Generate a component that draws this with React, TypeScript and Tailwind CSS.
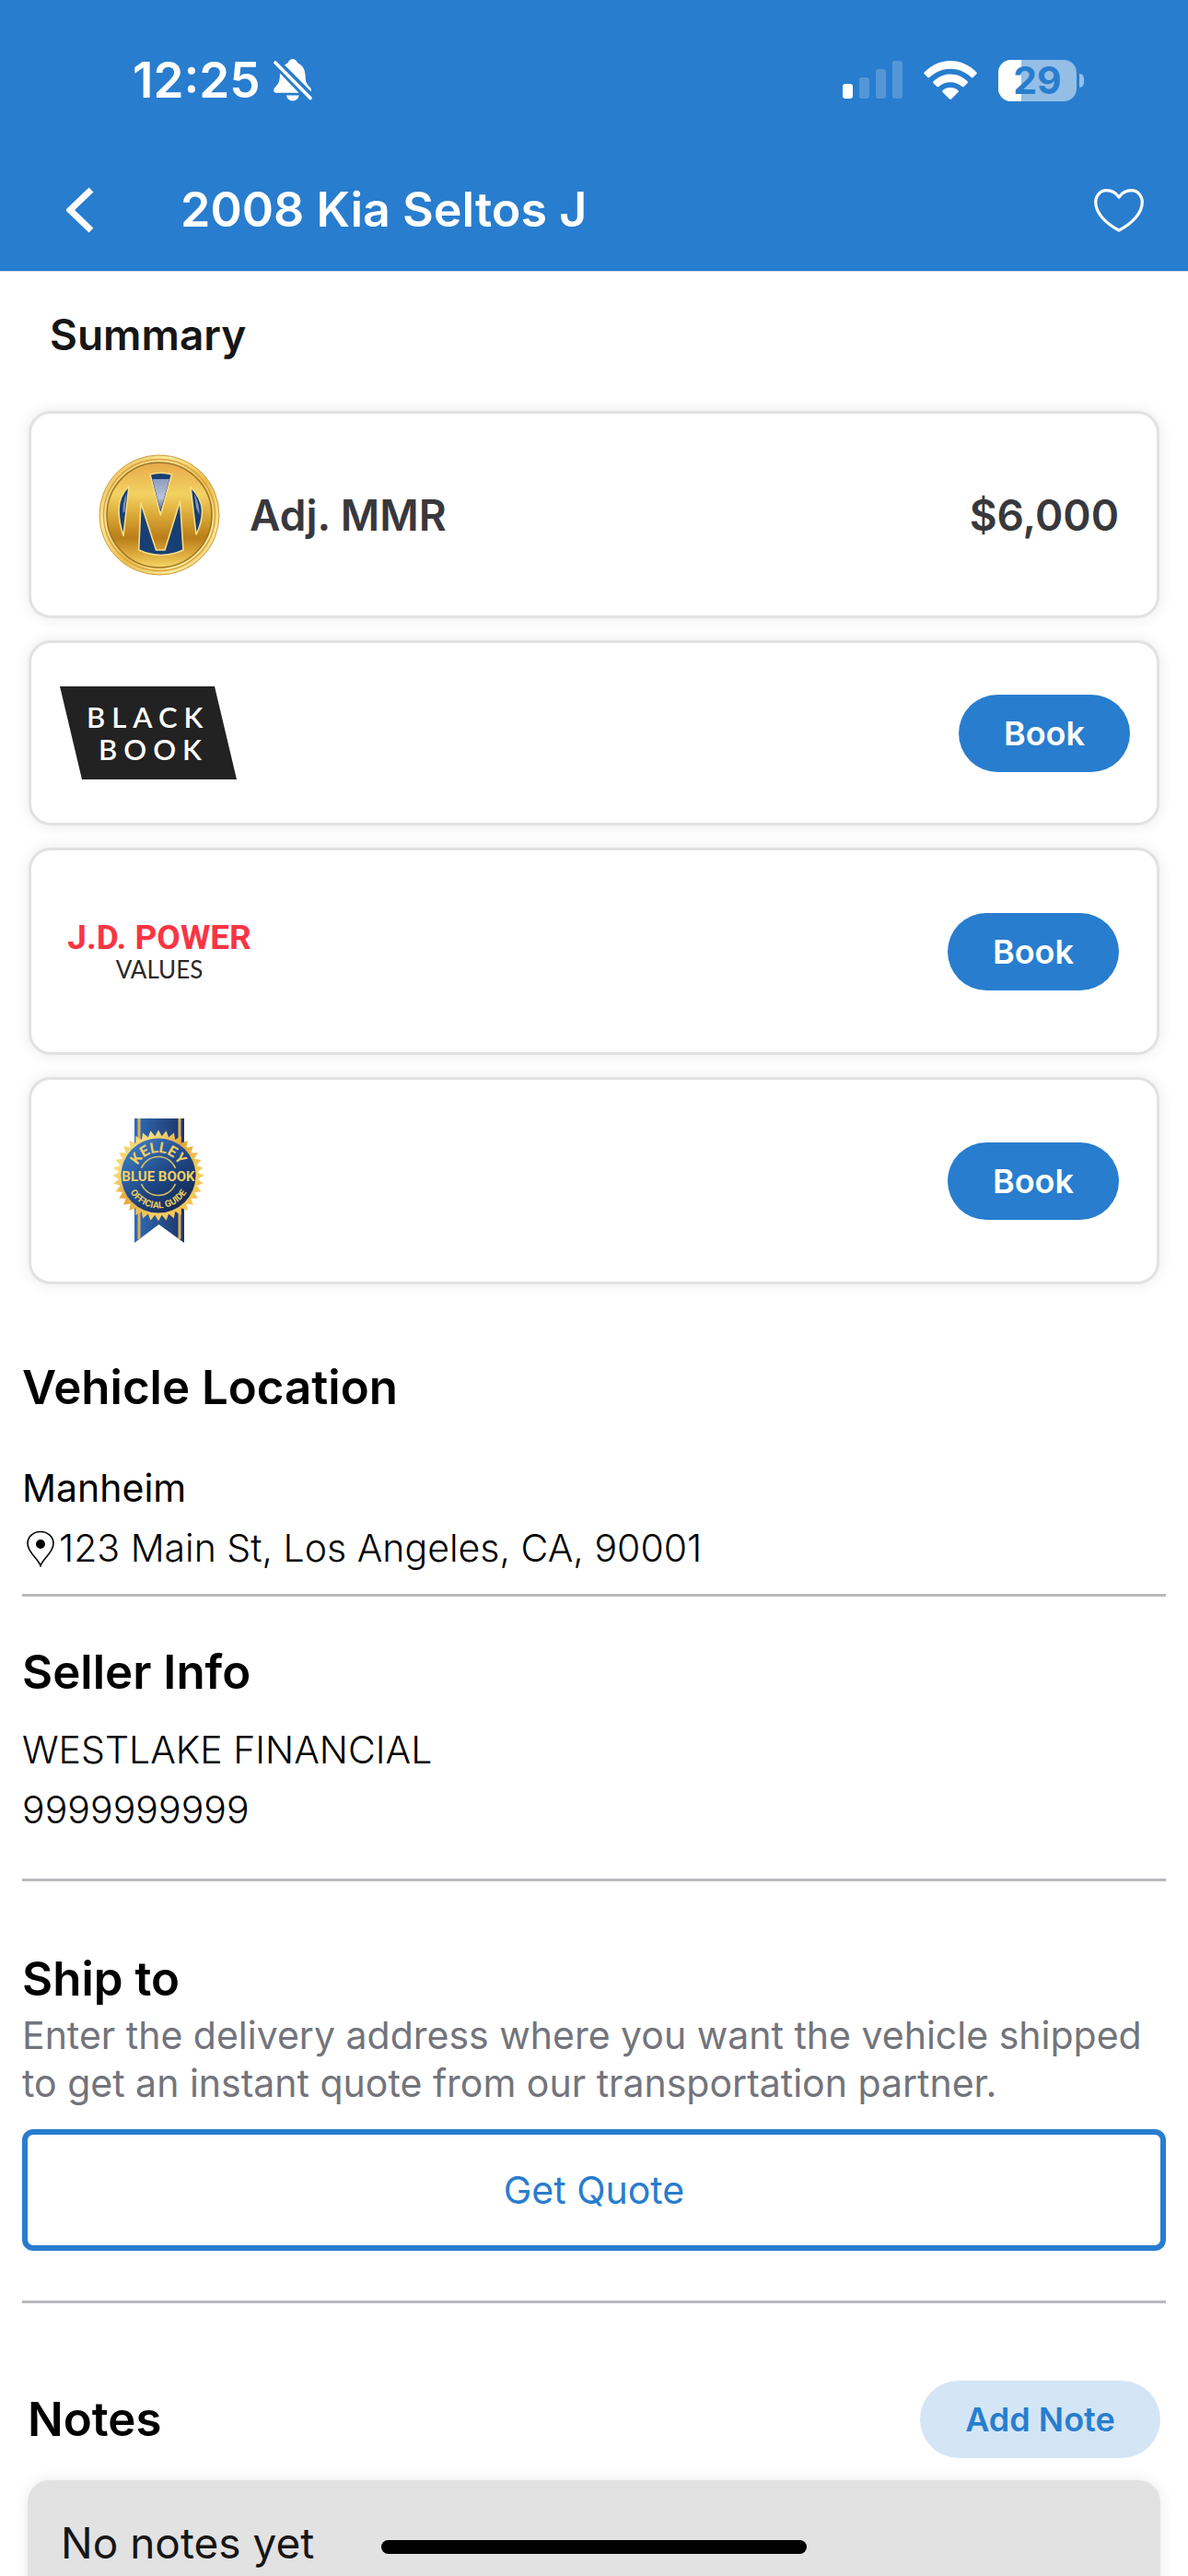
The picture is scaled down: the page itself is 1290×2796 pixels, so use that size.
import React, { useState } from 'react'

/* ─── Status bar ─────────────────────────────────────────────────────────── */

function BellOffIcon() {
  return (
    <svg width="42" height="46" viewBox="0 0 42 46" fill="white" aria-hidden="true">
      <path d="M12 6.5 C14.5 5 15.5 4.6 16 3.6 C17 1.2 18.6 0 20.8 0 C23 0 24.8 1.2 25.8 3.6 C26.2 4.6 27.6 5 29.6 6.6 C33.4 9.6 34.4 14 34.6 19 C34.8 25 35.8 27 39.8 31 C41 32.4 41.2 34 40.6 35.2 Z" />
      <path d="M7 15.5 L27.5 36.8 H3 C0 36.8 -0.8 33.4 1.4 31 C5.6 26.6 6.6 24.6 6.8 19 Z" />
      <path d="M14 39.5 H27.6 C27 43 24.4 45.4 20.8 45.4 C17.2 45.4 14.6 43 14 39.5 Z" />
      <line x1="2" y1="4" x2="40" y2="42.5" stroke="white" strokeWidth="3.6" strokeLinecap="round" />
    </svg>
  )
}

function SignalIcon() {
  return (
    <svg width="65" height="42" viewBox="0 0 65 42" fill="white" aria-hidden="true">
      <rect x="0" y="25" width="11" height="16" rx="3" />
      <rect x="18" y="18" width="11" height="23" rx="3" opacity="0.2" />
      <rect x="36" y="9" width="11" height="32" rx="3" opacity="0.2" />
      <rect x="54" y="0" width="11" height="41" rx="3" opacity="0.2" />
    </svg>
  )
}

function WifiIcon() {
  return (
    <svg width="58" height="42" viewBox="0 0 58 42" fill="white" aria-hidden="true">
      <path d="M0.6 12.4 C8.6 4.4 18.4 0 29 0 C39.6 0 49.4 4.4 57.4 12.4 C58 13 58 13.7 57.4 14.3 L53.6 18 C53 18.6 52.3 18.6 51.7 18 C45.3 12 37.4 8.8 29 8.8 C20.6 8.8 12.7 12 6.3 18 C5.7 18.6 5 18.6 4.4 18 L0.6 14.3 C0 13.7 0 13 0.6 12.4 Z" />
      <path d="M10.5 22.3 C15.7 17.3 22 14.6 29 14.6 C36 14.6 42.3 17.3 47.5 22.3 C48.1 22.9 48.1 23.6 47.5 24.2 L43.6 28 C43 28.6 42.4 28.6 41.8 28.1 C38.1 25 33.8 23.3 29 23.3 C24.2 23.3 19.9 25 16.2 28.1 C15.6 28.6 15 28.6 14.4 28 L10.5 24.2 C9.9 23.6 9.9 22.9 10.5 22.3 Z" />
      <path d="M20.5 32.2 C22.9 30.2 25.8 29 29 29 C32.2 29 35.1 30.2 37.5 32.2 C38.1 32.8 38.1 33.4 37.5 34 L30 41.4 C29.4 42 28.6 42 28 41.4 L20.5 34 C19.9 33.4 19.9 32.8 20.5 32.2 Z" />
    </svg>
  )
}

function Battery({ level }: { level: number }) {
  return (
    <div className="flex items-center gap-[3px]">
      <div className="relative flex h-[45px] w-[85px] items-center justify-center rounded-[14px] bg-[#94bee6]">
        <div className="absolute inset-y-0 left-0 rounded-l-[14px] bg-white" style={{ width: `${level}%` }} />
        <span className="relative text-[41px] leading-[45px] font-bold text-[#287dce]">{level}</span>
      </div>
      <div className="h-[15px] w-[5px] rounded-r-full bg-[#94bee6]" />
    </div>
  )
}

function StatusBar() {
  return (
    <div className="flex h-[174px] items-center justify-between pr-[113px] pl-[144px]">
      <div className="flex items-center gap-[14px]">
        <span className="text-[53px] leading-[60px] font-semibold">12:25</span>
        <BellOffIcon />
      </div>
      <div className="flex items-center gap-[23px]">
        <SignalIcon />
        <WifiIcon />
        <Battery level={29} />
      </div>
    </div>
  )
}

/* ─── Logos ──────────────────────────────────────────────────────────────── */

function ManheimLogo() {
  return (
    <svg width="132" height="132" viewBox="0 0 132 132" role="img" aria-label="Manheim">
      <defs>
        <linearGradient id="coin" x1="0" y1="0" x2="0" y2="1">
          <stop offset="0" stopColor="#e8a94a" />
          <stop offset="0.3" stopColor="#f3d262" />
          <stop offset="0.5" stopColor="#dba938" />
          <stop offset="0.72" stopColor="#b97e18" />
          <stop offset="0.86" stopColor="#dba63a" />
          <stop offset="1" stopColor="#f4d765" />
        </linearGradient>
        <linearGradient id="rim" x1="0" y1="0" x2="1" y2="1">
          <stop offset="0" stopColor="#e2ad3c" />
          <stop offset="0.3" stopColor="#fbe99c" />
          <stop offset="0.55" stopColor="#e9bd4d" />
          <stop offset="0.8" stopColor="#fbe99c" />
          <stop offset="1" stopColor="#d59c2c" />
        </linearGradient>
        <linearGradient id="glass" x1="0" y1="0" x2="0" y2="1">
          <stop offset="0" stopColor="#8f9cc0" />
          <stop offset="0.6" stopColor="#b9c2da" />
          <stop offset="1" stopColor="#4b6796" />
        </linearGradient>
      </defs>
      <circle cx="66" cy="66" r="65" fill="url(#rim)" stroke="#d29a35" strokeWidth="1" />
      <circle cx="66" cy="66" r="60.5" fill="none" stroke="#d9a33a" strokeWidth="1.5" />
      <circle cx="66" cy="66" r="57" fill="url(#coin)" stroke="#9b7326" strokeWidth="1.5" />
      <g stroke="#f7dd86" strokeWidth="1.6" strokeLinejoin="round">
        <path d="M56 22 Q67 18.5 79.5 22 L67.3 66 Z" fill="#173f74" />
        <path d="M33 34.5 Q22 46 22 60 Q22 74 27 88.5 Z" fill="#173f74" />
        <path d="M100 35.5 Q112 48 112.5 61 Q112.5 75 106 87 Z" fill="#173f74" />
        <path d="M46 53 L62.5 104 H72 L88.5 51 L92 104 Q68 115 43.7 104 Z" fill="#173f74" />
      </g>
      <path d="M58.5 27 H77 L67.3 61 Z" fill="url(#glass)" />
      <path d="M30.5 42 Q26 52 26.5 64 L28.5 62 Z" fill="#8093bb" />
      <path d="M104 43 Q110 54 109.5 66 L106 58 Z" fill="#8093bb" />
    </svg>
  )
}

function BlackBookLogo() {
  return (
    <svg width="192" height="101" viewBox="0 0 192 101" role="img" aria-label="Black Book">
      <path d="M0 0 H168 L192 101 H24 Z" fill="#222222" />
      <g fill="white" fontFamily="Lato, sans-serif" fontSize="31" fontWeight="600" letterSpacing="7">
        <text x="29" y="45">BLACK</text>
        <text x="42" y="80">BOOK</text>
      </g>
    </svg>
  )
}

function JdPowerLogo() {
  return (
    <div className="flex flex-col items-center pt-1 leading-[35px] whitespace-nowrap">
      <span className="font-[Roboto,sans-serif] text-[37px] font-bold text-[#f93544]">J.D. POWER</span>
      <span className="font-[Lato,sans-serif] text-[26px] font-normal text-[#2b2728]">VALUES</span>
    </div>
  )
}

const TEETH = 36

// Serrated edge of the seal, alternating between the two radii
const sealPoints = Array.from({ length: TEETH * 2 }, (_, i) => {
  const radius = i % 2 === 0 ? 49.5 : 43
  const angle = (Math.PI * i) / TEETH
  return `${(50 + radius * Math.sin(angle)).toFixed(1)},${(62 - radius * Math.cos(angle)).toFixed(1)}`
}).join(' ')

function KelleyLogo() {
  return (
    <svg width="103" height="135" viewBox="0 0 103 135" role="img" aria-label="Kelley Blue Book Official Guide">
      <defs>
        <linearGradient id="ribbon" x1="0" y1="0" x2="1" y2="0">
          <stop offset="0" stopColor="#2f6cb5" />
          <stop offset="1" stopColor="#1f3568" />
        </linearGradient>
        <linearGradient id="seal" x1="0" y1="0" x2="1" y2="1">
          <stop offset="0" stopColor="#f2c14f" />
          <stop offset="0.25" stopColor="#f6dc80" />
          <stop offset="0.45" stopColor="#e5a73b" />
          <stop offset="0.7" stopColor="#f5cf63" />
          <stop offset="1" stopColor="#f3b03c" />
        </linearGradient>
        <linearGradient id="disc" x1="0.1" y1="0.1" x2="0.8" y2="0.9">
          <stop offset="0" stopColor="#3f7cc6" />
          <stop offset="0.55" stopColor="#1f4886" />
          <stop offset="1" stopColor="#142c56" />
        </linearGradient>
        <path id="arc-top" d="M25 62 A25 25 0 0 1 75 62" />
        <path id="arc-bottom" d="M14.5 62 A35.5 35.5 0 0 0 85.5 62" />
      </defs>
      <path d="M24 0 H78 V135 L50.5 115 L24 135 Z" fill="url(#ribbon)" />
      <path d="M29 0 V131" stroke="#d9b25c" strokeWidth="3" />
      <path d="M73 0 V131" stroke="#d9b25c" strokeWidth="3" />
      <polygon points={sealPoints} fill="url(#seal)" />
      <circle cx="50" cy="62" r="40.5" fill="url(#disc)" />
      <path
        d="M31.5 54 A20 20 0 0 1 68.5 54 M31.5 71 A20 20 0 0 0 68.5 71"
        fill="none"
        stroke="#d8bd62"
        strokeWidth="1.5"
      />
      <g fill="#f0cf62" fontFamily="Roboto, sans-serif" fontWeight="700" textAnchor="middle">
        <text fontSize="16">
          <textPath href="#arc-top" startOffset="50%">KELLEY</textPath>
        </text>
        <text x="50" y="68" fontSize="15">BLUE BOOK</text>
        <text fontSize="10">
          <textPath href="#arc-bottom" startOffset="50%">OFFICIAL GUIDE</textPath>
        </text>
      </g>
    </svg>
  )
}

/* ─── Shared pieces ──────────────────────────────────────────────────────── */

function BookButton({ source }: { source: string }) {
  return (
    <button
      type="button"
      aria-label={`Book ${source}`}
      className="h-[84px] w-[186px] rounded-full bg-[#287dce] text-[36px] leading-[40px] font-semibold text-white"
    >
      Book
    </button>
  )
}

function ValueCard({ logo, compact, children }: { logo: React.ReactNode; compact?: boolean; children: React.ReactNode }) {
  return (
    <div
      className={`flex items-center rounded-[24px] border-[3px] border-[#e2e2e2] bg-white shadow-[0_0_16px_rgba(0,0,0,0.09)] ${
        compact ? 'px-[29px] py-[30px]' : 'px-[41px] py-[42px]'
      }`}
    >
      <div className="flex h-[135px] w-[196px] shrink-0 items-center justify-center">{logo}</div>
      <div className="flex flex-1 items-center justify-end text-[46px] leading-[60px] font-semibold text-[#38383d]">
        {children}
      </div>
    </div>
  )
}

function SectionTitle({ children }: { children: React.ReactNode }) {
  return <h2 className="text-[51px] leading-[64px] font-semibold">{children}</h2>
}

function PinIcon() {
  return (
    <svg width="32" height="40" viewBox="0 0 32 40" fill="none" aria-hidden="true">
      <path
        d="M16 38.5 C13.5 31 2 24 2 14.5 C2 7 8.3 1.5 16 1.5 C23.7 1.5 30 7 30 14.5 C30 24 18.5 31 16 38.5 Z"
        stroke="black"
        strokeWidth="1.6"
      />
      <circle cx="16" cy="15" r="5" fill="black" />
    </svg>
  )
}

/* ─── Page ───────────────────────────────────────────────────────────────── */

export default function App() {
  const [liked, setLiked] = useState(false)

  return (
    <div className="relative flex h-screen flex-col overflow-hidden bg-white font-[Inter,sans-serif] text-black">
      <header className="border-b border-[#d3dbe0] bg-[#287dce] pb-3 text-white">
        <StatusBar />
        <div className="flex h-[108px] items-center pr-[48px] pl-[72px]">
          <button type="button" aria-label="Back">
            <svg width="30" height="50" viewBox="0 0 30 50" fill="none">
              <path d="M27 3 L4 25 L27 47" stroke="white" strokeWidth="7" />
            </svg>
          </button>
          <h1 className="ml-[94px] flex-1 text-[52px] leading-[60px] font-semibold">2008 Kia Seltos J</h1>
          <button type="button" aria-label="Favorite" aria-pressed={liked} onClick={() => setLiked(!liked)}>
            <svg width="54" height="47" viewBox="0 0 54 47" fill={liked ? 'white' : 'none'}>
              <path
                d="M27 9 C23.5 4 18.5 1.7 13.5 1.7 C7 1.7 1.7 7 1.7 14.5 C1.7 26.5 13 37.5 27 45 C41 37.5 52.3 26.5 52.3 14.5 C52.3 7 47 1.7 40.5 1.7 C35.5 1.7 30.5 4 27 9 Z"
                stroke="white"
                strokeWidth="3.2"
                strokeLinejoin="round"
              />
            </svg>
          </button>
        </div>
      </header>

      <main className="flex-1 overflow-hidden">
        <h2 className="mt-[38px] mb-[53px] pl-[54px] text-[46px] leading-[60px] font-semibold text-[#161616]">Summary</h2>

        <div className="mx-[31px] flex flex-col gap-6">
          <ValueCard logo={<ManheimLogo />}>
            <span className="flex-1">Adj. MMR</span>
            <span>$6,000</span>
          </ValueCard>
          <ValueCard logo={<BlackBookLogo />} compact>
            <BookButton source="Black Book" />
          </ValueCard>
          <ValueCard logo={<JdPowerLogo />}>
            <BookButton source="J.D. Power" />
          </ValueCard>
          <ValueCard logo={<KelleyLogo />}>
            <BookButton source="Kelley Blue Book" />
          </ValueCard>
        </div>

        <div className="mx-6 mt-20 text-[41px] leading-[65px] font-light">
          <section className="border-b-[3px] border-[#b9b8bd] pb-[17px]">
            <SectionTitle>Vehicle Location</SectionTitle>
            <p className="mt-[45px] font-normal">Manheim</p>
            <p className="flex items-center pl-1">
              <PinIcon />
              <span className="ml-1">123 Main St, Los Angeles, CA, 90001</span>
            </p>
          </section>

          <section className="border-b-[3px] border-[#b9b8bd] pt-[50px] pb-[42px]">
            <SectionTitle>Seller Info</SectionTitle>
            <p className="mt-5">WESTLAKE FINANCIAL</p>
            <p>9999999999</p>
          </section>

          <section className="border-b-[3px] border-[#b9b8bd] pt-[74px] pb-[54px]">
            <SectionTitle>Ship to</SectionTitle>
            <p className="mt-[3px] leading-[52px] font-normal text-[#73747c]">
              Enter the delivery address where you want the vehicle shipped to get an instant quote from our transportation partner.
            </p>
            <button
              type="button"
              className="mt-6 block h-[132px] w-full rounded-[12px] border-[6px] border-[#287dce] leading-[52px] font-normal text-[#287dce]"
            >
              Get Quote
            </button>
          </section>
        </div>

        <section className="mx-[30px] mt-[84px]">
          <div className="flex items-center justify-between">
            <SectionTitle>Notes</SectionTitle>
            <button
              type="button"
              className="h-[84px] w-[261px] rounded-full bg-[#d4e5f6] text-[36px] leading-[40px] font-semibold text-[#287dce]"
            >
              Add Note
            </button>
          </div>
          <div className="mt-6 rounded-[24px] bg-[#e2e2e2] px-9 py-[38px] shadow-[0_0_16px_rgba(0,0,0,0.09)]">
            <p className="text-[46px] leading-[60px] text-[#161616]">No notes yet</p>
          </div>
        </section>
      </main>

      {/* Home indicator */}
      <div className="absolute bottom-6 left-1/2 h-[15px] w-[462px] -translate-x-1/2 rounded-full bg-black" />
    </div>
  )
}
